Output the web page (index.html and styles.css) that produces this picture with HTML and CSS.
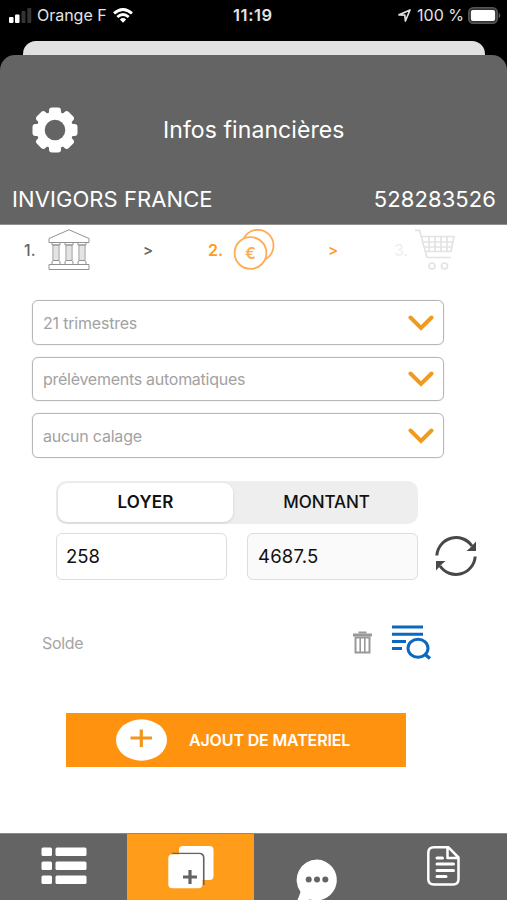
FILE: index.html
```html
<!DOCTYPE html>
<html lang="fr">
<head>
<meta charset="utf-8">
<title>Infos financières</title>
<link rel="stylesheet" href="styles.css">
</head>
<body>
<div class="status">
  <div class="status-left">
    <svg class="signal" width="23" height="16" viewBox="0 0 23 16"><rect y="10" width="4.5" height="6" rx="1" fill="#fff"/><rect x="6" y="7.5" width="4.5" height="8.500" rx="1" fill="#fff"/><rect x="12.500" y="4" width="4" height="12" rx="1" fill="#333"/><rect x="18.300" y="1" width="4" height="15" rx="1" fill="#333"/></svg>
    <span class="carrier">Orange F</span>
    <svg width="20" height="15" viewBox="0 0 20 15" fill="none" stroke="#fff" stroke-width="2.800"><path d="M1 5.400Q10-2.500 19 5.400M4.300 9Q10 4 15.700 9"/><path d="M6.900 11.500Q10 8.700 13.100 11.500L10 14.700Z" fill="#fff" stroke="none"/></svg>
  </div>
  <span class="clock">11:19</span>
  <div class="status-right">
    <svg width="13" height="13" viewBox="0 0 13 13" fill="none" stroke="#ddd" stroke-width="1.700" stroke-linejoin="round"><path d="M1 5.900L12 1L7.400 12L6.800 6.200Z"/></svg>
    <span class="percent">100 %</span>
    <svg width="33" height="17" viewBox="0 0 33 17"><rect x=".8" y=".8" width="28.400" height="15.400" rx="4.500" fill="#333" stroke="#555" stroke-width="1.600"/><rect x="2.900" y="2.900" width="24.200" height="11.200" rx="2" fill="#fff"/><path d="M30.700 5.500Q34 8.500 30.700 11.500Z" fill="#555"/></svg>
  </div>
</div>
<div class="sheet-behind"></div>
<header class="header">
  <div class="title-row">
    <svg class="gear" width="46" height="46" viewBox="-23 -23 46 46"><g fill="#fff"><circle r="18.500"/><g id="t"><rect x="-6" y="-22.500" width="12" height="45" rx="3"/><rect x="-22.500" y="-6" width="45" height="12" rx="3"/></g><use href="#t" transform="rotate(45)"/></g><circle r="10.300" fill="#646464"/></svg>
    <h1 class="title">Infos financières</h1>
  </div>
  <div class="company"><span class="name">INVIGORS FRANCE</span><span class="siren">528283526</span></div>
</header>
<main class="main">
  <div class="steps">
    <span class="num num1">1.</span>
    <svg class="bank" width="42" height="42" viewBox="0 0 42 42" fill="#fff" stroke="#919191" stroke-width="1"><path d="M1 9.500L21 .8L41 9.500V13.500H1ZM1 35.500H41V40.500H1Z"/><g id="col"><path d="M4 13.500H12V16H4ZM5 16H11V31.500H5ZM4 35.500V33L5 31.500H11L12 33V35.500Z"/><path d="M7 17V31M9 17V31" stroke="#c8c8c8"/></g><use href="#col" x="13"/><use href="#col" x="26"/></svg>
    <span class="arrow arrow1">&gt;</span>
    <span class="num num2">2.</span>
    <svg class="coins" width="42" height="42" viewBox="0 0 42 42" fill="#fff" stroke="#ffad55" stroke-width="1.800"><circle cx="24.800" cy="16.500" r="15.700"/><circle cx="17.500" cy="24" r="15.900"/><text x="17.500" y="29.500" text-anchor="middle" class="euro" stroke="none">€</text></svg>
    <span class="arrow arrow2">&gt;</span>
    <span class="num num3">3.</span>
    <svg class="cart" width="40" height="42" viewBox="0 0 40 42" fill="none" stroke="#e3e3e3" stroke-width="1.700"><path d="M0 1.300H4.500L12 28.500H36M7 7.500H39L36 22.500H10.500M8 13H38M9.500 18H37M14 8V22M20 8V22M26 8V22M32 8V22"/><circle cx="17" cy="37" r="3"/><circle cx="29.500" cy="37" r="3"/></svg>
  </div>
  <div class="selects">
    <div class="select"><span class="s1">21 trimestres</span><svg class="chev" width="26" height="16" viewBox="0 0 26 16"><path d="M2.500 2.500L13 13L23.500 2.500"/></svg></div>
    <div class="select"><span class="s2">prélèvements automatiques</span><svg class="chev" width="26" height="16" viewBox="0 0 26 16"><path d="M2.500 2.500L13 13L23.500 2.500"/></svg></div>
    <div class="select"><span class="s3">aucun calage</span><svg class="chev" width="26" height="16" viewBox="0 0 26 16"><path d="M2.500 2.500L13 13L23.500 2.500"/></svg></div>
  </div>
  <div class="segmented"><div class="segment active">LOYER</div><div class="segment other">MONTANT</div></div>
  <div class="inputs">
    <div class="input">258</div>
    <div class="input computed">4687.5</div>
    <svg class="refresh" width="42" height="42" viewBox="0 0 42 42" fill="none" stroke="#484848" stroke-width="3"><path d="M1.800 20.500A19.300 19.300 0 0 1 37 11M40.200 21.500A19.300 19.300 0 0 1 5 31"/><path d="M41 6.500V16H31.500L35 13ZM1 35.500V26H10.500L7 29Z" fill="#484848" stroke="none"/></svg>
  </div>
  <div class="balance">
    <span class="solde">Solde</span>
    <svg class="trash" width="19" height="23" viewBox="0 0 19 23" fill="none" stroke="#999"><path d="M0 4H19" stroke-width="3"/><path d="M6.500 2.500V1.500H12.500V2.500" stroke-width="2"/><path d="M2.500 6.500H16.500V21.500H2.500Z" stroke-width="2"/><path d="M7.200 7V21M11.800 7V21" stroke-width="1.600"/></svg>
    <svg class="search-list" width="40" height="35" viewBox="0 0 40 35" fill="none" stroke="#0b68c1" stroke-width="3"><path d="M0 2H31M0 9.200H31M0 16.400H14M0 23.600H10"/><ellipse cx="26" cy="23.300" rx="10" ry="9"/><path d="M32.500 29L38 33.500" stroke-width="3.500"/></svg>
  </div>
  <div class="add">
    <svg width="51" height="42" viewBox="0 0 51 42"><ellipse cx="25.500" cy="21" rx="25.500" ry="20.700" fill="#fff"/><path d="M14.500 19H36M25.300 10.500V28" stroke="#f0971c" stroke-width="3.200"/></svg>
    <span class="add-label">AJOUT DE MATERIEL</span>
  </div>
</main>
<nav class="tabs">
  <div class="tab"><svg class="list" width="46" height="38" viewBox="0 0 46 38" fill="#fff"><g id="r"><rect x=".5" y=".5" width="10.500" height="8.500" rx="1.500"/><rect x="14.500" y=".5" width="31" height="8.500" rx="1.500"/></g><use href="#r" y="14"/><use href="#r" y="28"/></svg></div>
  <div class="tab selected"><svg class="cards" width="46" height="44" viewBox="0 0 46 44"><rect x="11" y="1" width="34.500" height="34" rx="4" fill="#fff"/><path d="M4 8.500H31Q35.700 8.500 35.700 13V40" stroke="#646464" stroke-width="1.700" fill="none"/><rect x=".3" y="9.300" width="34.200" height="34" rx="4" fill="#fff"/><path d="M15 32H29M22 25V39" stroke="#646464" stroke-width="3.200"/></svg></div>
  <div class="tab"><svg class="chat" width="42" height="41" viewBox="0 0 42 41"><path d="M21 .5A20.500 20.500 0 1 1 14 40.500L0 44Q3 38 4.500 33A20.500 20.500 0 0 1 21 .5Z" fill="#fff"/><g fill="#646464"><circle cx="12.700" cy="20.500" r="3"/><circle cx="21" cy="20.500" r="3"/><circle cx="29.300" cy="20.500" r="3"/></g></svg></div>
  <div class="tab"><svg class="doc" width="33" height="40" viewBox="0 0 33 40" fill="none" stroke="#fff" stroke-width="2.500" stroke-linejoin="round"><path d="M7 1.300H21.500L31.500 11.500V33Q31.500 38.500 26 38.500H7Q1.300 38.500 1.300 33V7Q1.300 1.300 7 1.300ZM20.500 1.500V12H31"/><path d="M10 12H15.500M10 18H26.500M10 24.500H26.500M10 30.500H19" stroke-width="3" stroke-linecap="round"/></svg></div>
</nav>
</body>
</html>
```
FILE: styles.css
```css
* { box-sizing: border-box; }
body { margin: 0; width: 507px; height: 900px; overflow: hidden; display: flex; flex-direction: column; background: #000; font-family: Inter, "Liberation Sans", sans-serif; }
svg { display: block; flex: none; }
span, .title, .segment, .input { white-space: nowrap; }
.status { height: 41px; flex: none; display: grid; grid-template-columns: 224px 42px 1fr; padding: 0 6px 11px 9px; align-items: center; color: #e4e4e4; font-size: 16px; }
.status-left, .status-right { display: flex; align-items: center; }
.signal { margin-right: 5px; }
.carrier { margin-right: 6px; width: 70px; letter-spacing: -.02px; }
.clock { font-weight: 600; font-size: 16.500px; letter-spacing: .6px; }
.status-right { justify-content: flex-end; }
.percent { margin: 0 4px 0 6px; }
.sheet-behind { height: 14px; flex: none; margin: 0 22px 0 23px; background: #e1e1e1; border-radius: 13px 13px 0 0; }
.header { height: 170px; flex: none; background: #646464; border-radius: 15px 15px 0 0; color: #fff; border-bottom: 1px solid #919191; }
.title-row { height: 120px; display: grid; grid-template-columns: 131px 1fr; align-items: center; padding: 30px 0 0 32px; }
.title { margin: 0; font-size: 23px; font-weight: 400; letter-spacing: .08px; }
.company { display: flex; justify-content: space-between; padding: 11px 11px 0 12px; font-size: 22px; line-height: 26px; letter-spacing: .08px; }
.main { height: 608px; flex: none; background: #fff; }
.steps { display: flex; height: 75px; padding: 4px 0 0 24px; font-size: 16px; color: #666; }
.num { line-height: 42px; font-weight: 500; }
.num1 { width: 24px; }
.arrow { line-height: 42px; font-weight: 600; font-size: 15px; }
.arrow1 { width: 65px; margin-left: 53px; }
.num2 { width: 25px; color: #ff9a20; font-weight: 600; }
.coins { margin-right: 53px; }
.euro { font-size: 16px; font-weight: 600; fill: #ffad55; }
.arrow2 { width: 66px; color: #ff9a20; }
.num3 { width: 21px; color: #eee; font-weight: 400; }
.selects { display: grid; gap: 12px; margin-left: 32px; width: 412px; }
.select { height: 44.500px; display: flex; align-items: center; justify-content: space-between; padding: 1px 9px 0 10px; border: 1.500px solid #b7b7b7; box-shadow: 0 0 1px #bbb; border-radius: 6px; color: #a2a2a2; font-size: 16px; }
.s1, .s3 { letter-spacing: -.2px; }
.s2 { letter-spacing: -.27px; }
.chev { fill: none; stroke: #f19a20; stroke-width: 4; stroke-linecap: round; }
.segmented { display: flex; width: 362px; height: 43px; margin: 23px 0 9px 56px; padding: 2px; border-radius: 10px; background: #eee; }
.segment { flex: 1; display: flex; align-items: center; justify-content: center; font-size: 17px; font-weight: 500; color: #111; }
.active { flex: 0 0 175px; background: #fff; border-radius: 9px; font-weight: 600; box-shadow: 0 1px 3px #0002; letter-spacing: .2px; }
.other { padding-left: 4px; letter-spacing: -.1px; }
.inputs { display: flex; padding-left: 56px; }
.input { width: 171px; height: 47px; margin-right: 20px; border: 1px solid #ddd; border-radius: 6px; line-height: 45px; padding-left: 9px; font-size: 18.500px; color: #111; }
.computed { background: #fafafa; margin-right: 17px; padding-left: 10px; letter-spacing: .2px; }
.refresh { margin-top: 2px; }
.balance { display: flex; align-items: center; height: 35px; margin: 45px 0 53px 42px; font-size: 16px; color: #a5a5a5; }
.solde { width: 311px; padding-top: 1px; letter-spacing: -.3px; }
.search-list { margin-left: 20px; }
.add { display: flex; align-items: center; width: 340px; height: 54px; margin-left: 66px; padding-left: 50px; background: #ff930f; }
.add-label { margin-left: 22px; color: #fff; font-size: 16px; font-weight: 600; letter-spacing: -.15px; }
.tabs { flex: 1; display: grid; grid-template-columns: 127px 127px 127px 126px; background: #646464; border-top: 1px solid #8a8a8a; }
.tab { display: flex; justify-content: center; align-items: flex-start; overflow: hidden; }
.selected { background: #ff9c1a; }
.list { margin-top: 13px; }
.cards { margin-top: 11px; }
.chat { margin: 25px 2px 0 0; }
.doc { margin: 12px 2px 0 0; }
```
